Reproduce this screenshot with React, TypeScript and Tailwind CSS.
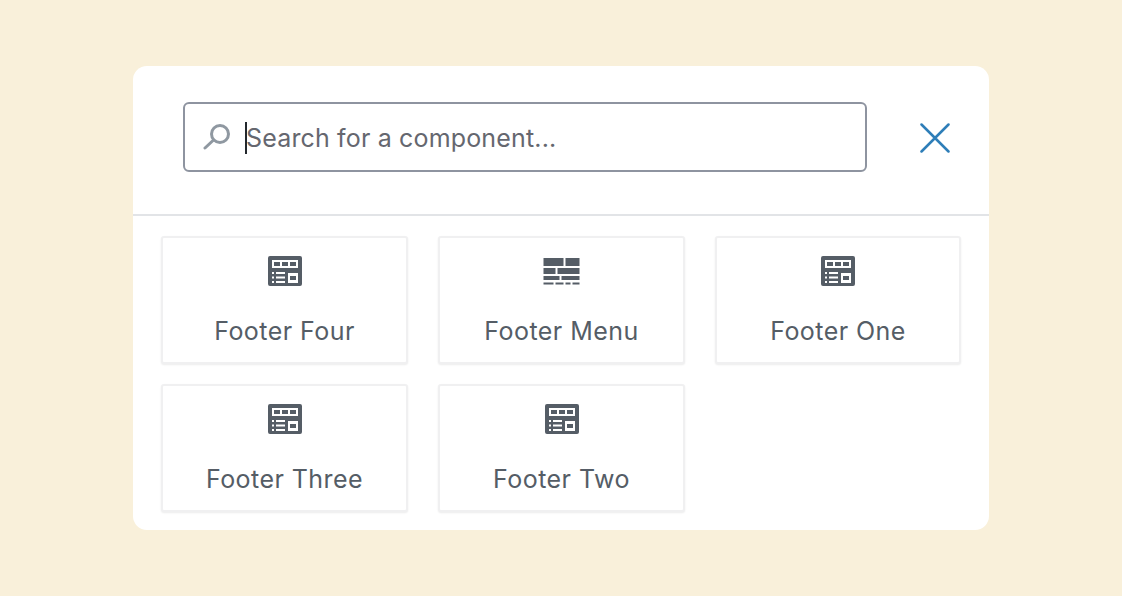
const items = [
  { label: 'Footer Four', icon: 'layout' },
  { label: 'Footer Menu', icon: 'bricks' },
  { label: 'Footer One', icon: 'layout' },
  { label: 'Footer Three', icon: 'layout' },
  { label: 'Footer Two', icon: 'layout' },
]

function LayoutIcon() {
  return (
    <svg width="34" height="30" viewBox="0 0 34 30" className="block">
      <path
        fillRule="evenodd"
        fill="#555d66"
        d="M2 0h30a2 2 0 0 1 2 2v26a2 2 0 0 1-2 2H2a2 2 0 0 1-2-2V2a2 2 0 0 1 2-2ZM4 4v8h26V4H4Zm16 13v10h10V17H20Z"
      />
      <path fill="#ffffff" d="M4 16h2v2H4zM8 16h9v2H8zM4 20.5h2v2H4zM8 20.5h9v2H8zM4 25h2v2H4zM8 25h9v2H8z" />
      <path fill="#555d66" d="M6 6h6v4H6zM14 6h6v4h-6zM22 6h6v4h-6zM22 20h6v4h-6z" />
    </svg>
  )
}

function BricksIcon() {
  return (
    <svg width="37" height="27" viewBox="0 0 36 27" fill="#555d66" className="-ml-px block">
      <path d="M0 0h20v8H0zM22 0h14v8H22zM0 10h12v6H0zM14 10h22v6H14zM0 18h16v4H0zM18 18h18v4H18zM0 24.500h10v2H0zM12 24.500h8v2h-8zM22 24.500h5v2h-5zM29 24.500h7v2h-7z" />
    </svg>
  )
}

export default function App() {
  return (
    <div className="flex h-[596px] items-center justify-center bg-[#f9f0da] font-['Inter',sans-serif]">
      <div className="h-[464px] w-[856px] rounded-[14px] bg-white">
        <div className="flex h-[150px] items-start border-b-2 border-[#e2e4e7] pl-[50px] pr-[39px] pt-9">
          <div className="flex h-[70px] w-[684px] items-center rounded-[6px] border-2 border-[#8e94a0] pl-[18px]">
            <svg width="27" height="26" viewBox="0 0 27 26" fill="none" stroke="#8f98a1" strokeWidth="3" className="block">
              <circle cx="17" cy="10" r="8.5" />
              <path d="M10 16.500 2 24" strokeLinecap="round" />
            </svg>
            <div className="relative ml-[16px] pt-[2px] text-[25px] leading-none tracking-[0.16px] text-[#65676f]">
              <span className="absolute -left-px -top-[2px] h-[32px] w-[2px] bg-[#23282d]" />
              Search for a component...
            </div>
          </div>
          <svg width="30" height="30" viewBox="0 0 30 30" fill="none" stroke="#2e7eb8" strokeWidth="2.500" strokeLinecap="round" className="ml-auto mt-[21px] block">
            <path d="M1.500 1.500l27 27M28.500 1.500l-27 27" />
          </svg>
        </div>
        <div className="grid grid-cols-[247px_247px_246px] gap-x-[30px] gap-y-5 pl-7 pt-5">
          {items.map((item) => (
            <div
              key={item.label}
              className="flex h-[128px] flex-col items-center rounded-[3px] border-2 border-[#f0f0f1] bg-white shadow-[0_1px_2px_rgba(0,0,0,0.08)]"
            >
              <div className="mt-[18px] flex h-[30px] items-center">
                {item.icon === 'layout' ? <LayoutIcon /> : <BricksIcon />}
              </div>
              <div className="mt-[29px] text-[25px] leading-[32px] tracking-[0.45px] text-[#555d66]">{item.label}</div>
            </div>
          ))}
        </div>
      </div>
    </div>
  )
}
